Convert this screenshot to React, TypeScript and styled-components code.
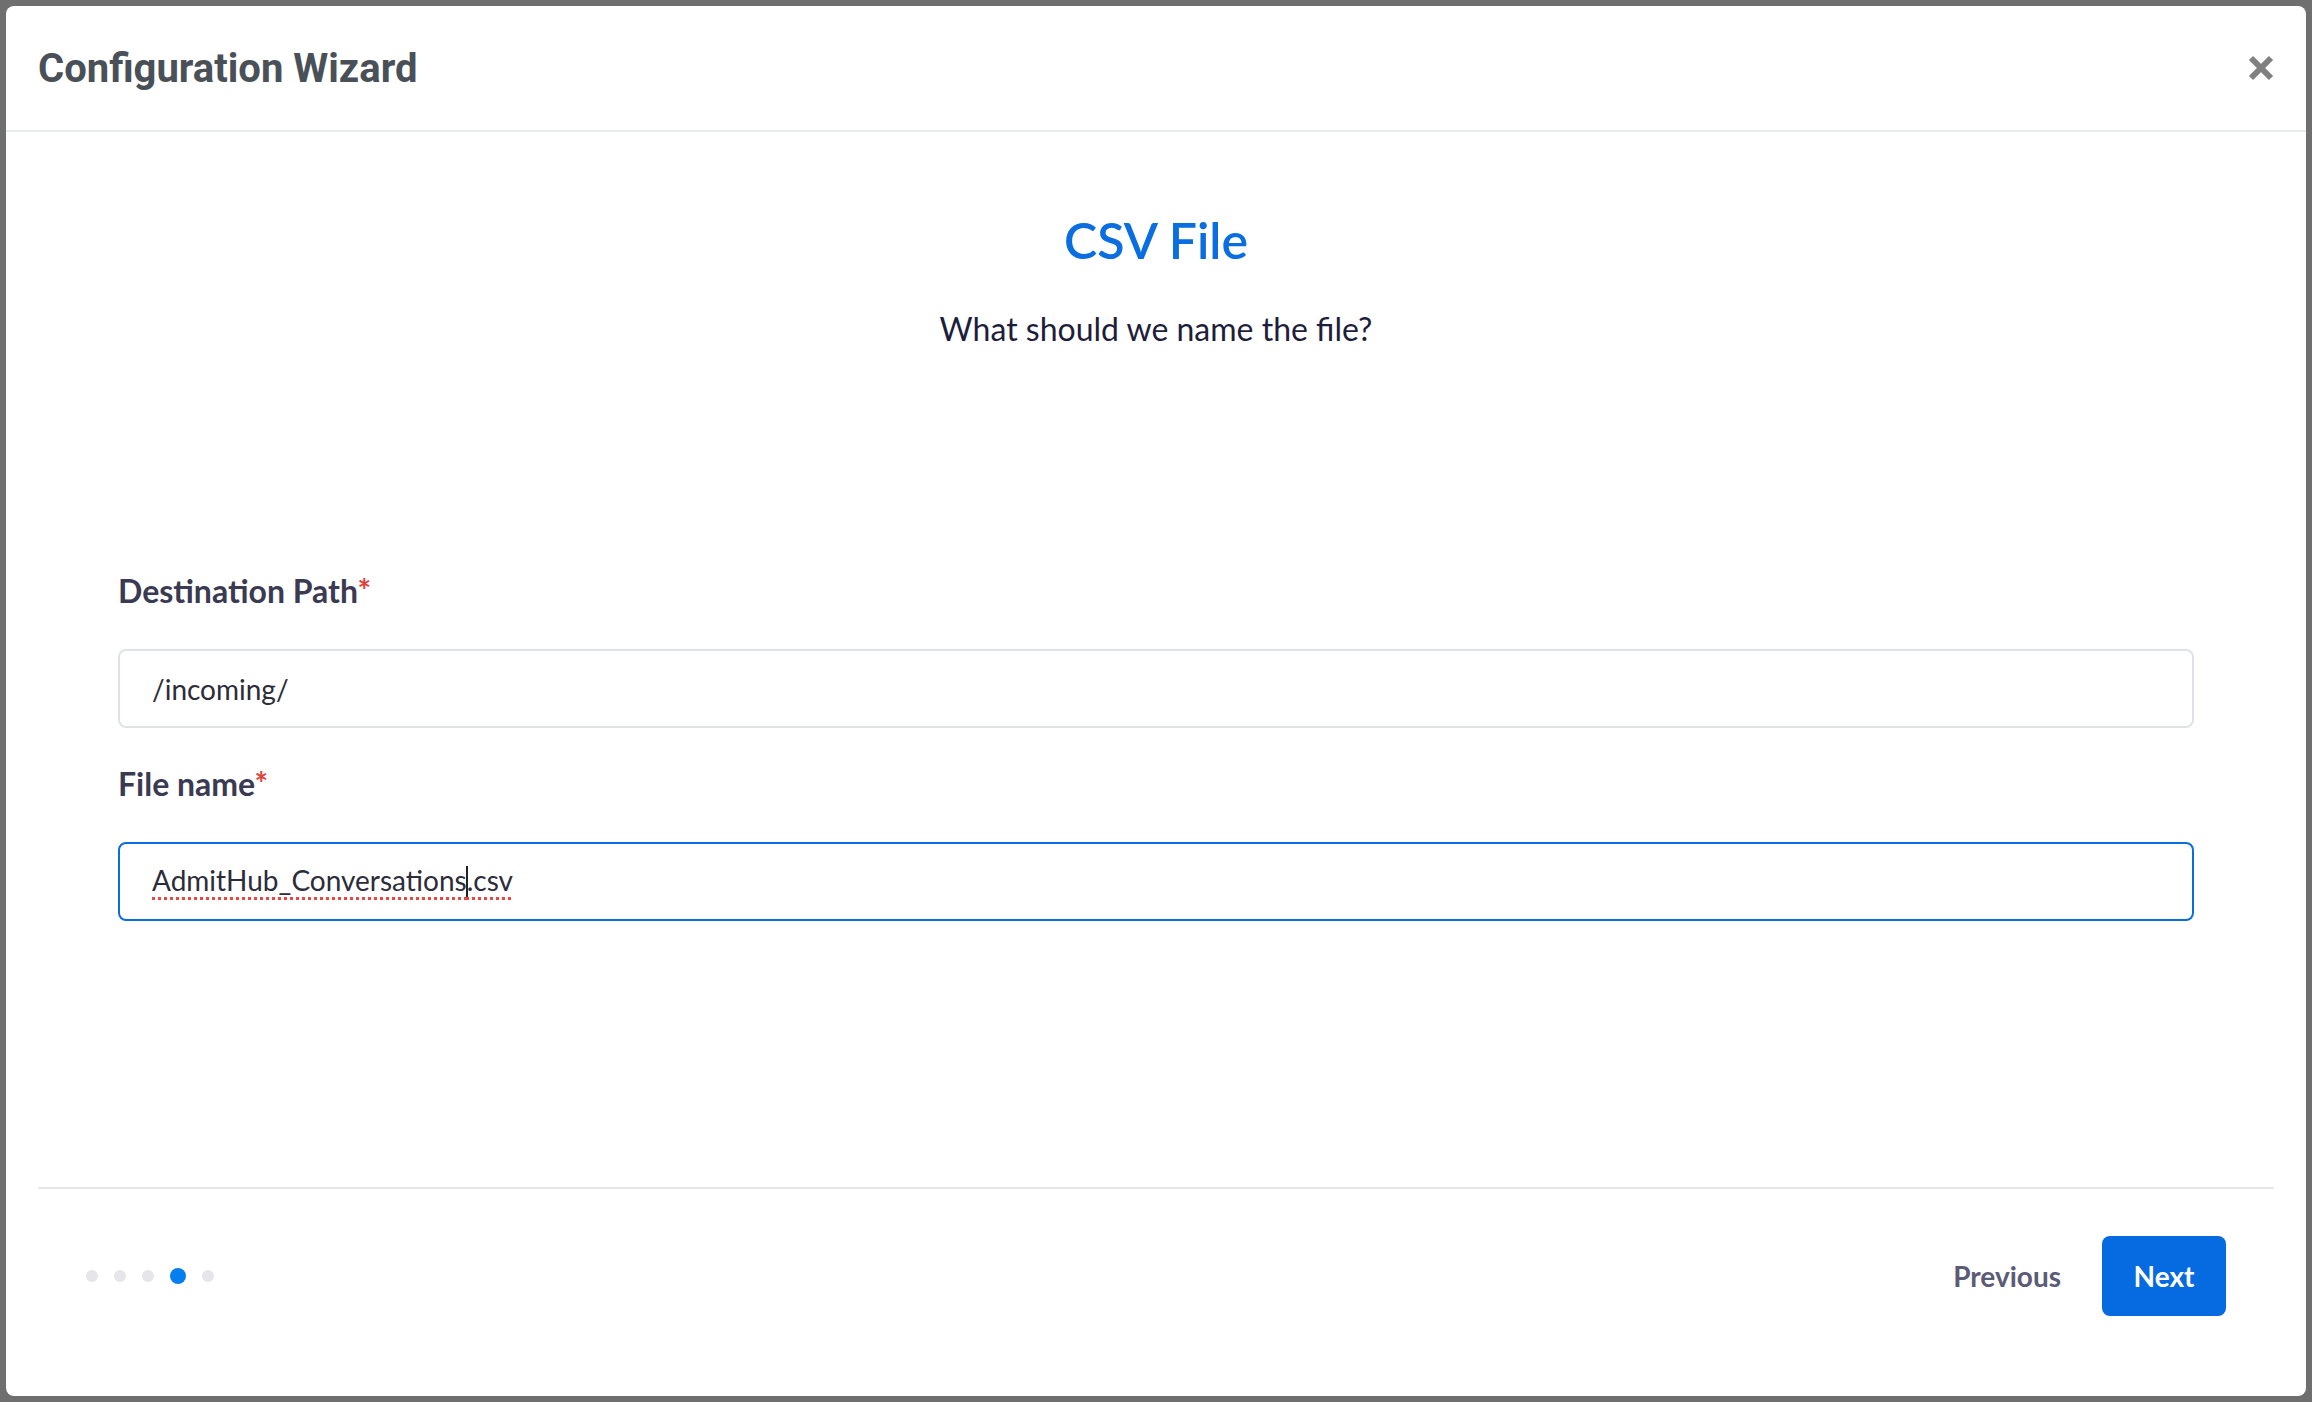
import React from 'react'
import styled, {createGlobalStyle} from 'styled-components'

const GlobalStyle = createGlobalStyle`
  html, body {
    margin: 0;
    padding: 0;
    background: #6f6f6f;
  }
  * {
    box-sizing: border-box;
  }
`

const Backdrop = styled.div`
  width: 2312px;
  height: 1402px;
  padding: 6px;
  background: #6f6f6f;
`

const Modal = styled.div`
  width: 100%;
  height: 100%;
  background: #fff;
  border-radius: 8px;
  display: flex;
  flex-direction: column;
  overflow: hidden;
`

const Header = styled.div`
  height: 126px;
  flex-shrink: 0;
  display: flex;
  align-items: center;
  justify-content: space-between;
  padding: 0 32px 0 32px;
  border-bottom: 2px solid #e9ecef;
`

const ModalTitle = styled.h2`
  margin: 0;
  font-family: Roboto, 'Liberation Sans', sans-serif;
  font-weight: 700;
  font-size: 40px;
  color: #4a5058;
`

const CloseButton = styled.button`
  border: none;
  background: none;
  padding: 0;
  width: 26px;
  height: 26px;
  display: flex;
  align-items: center;
  justify-content: center;
  cursor: pointer;
`

const Body = styled.div`
  flex: 1;
  display: flex;
  flex-direction: column;
  padding: 78px 112px 0 112px;
  font-family: Lato, 'Open Sans', sans-serif;
`

const StepTitle = styled.h1`
  margin: 0;
  text-align: center;
  font-size: 50px;
  line-height: 60px;
  font-weight: 600;
  color: #0b6ee0;
`

const StepSubtitle = styled.p`
  margin: 39px 0 0 0;
  text-align: center;
  font-size: 32px;
  line-height: 40px;
  color: #1e1e3c;
`

const Fields = styled.div`
  margin-top: 222px;
  display: flex;
  flex-direction: column;
`

const Label = styled.label<{$first?: boolean}>`
  margin-top: ${p => (p.$first ? '0' : '36px')};
  font-size: 32px;
  line-height: 40px;
  font-weight: 700;
  color: #3a3a52;
`

const Required = styled.span`
  color: #e0403a;
`

const InputBox = styled.div<{$focused?: boolean}>`
  margin-top: 38px;
  height: 79px;
  display: flex;
  align-items: center;
  padding: 0 32px;
  border: 2px solid ${p => (p.$focused ? '#0b6ee0' : '#dfe3e8')};
  border-radius: 8px;
  font-size: 28px;
  color: #2c2c3a;
`

const Misspelled = styled.span`
  text-decoration: underline dotted #ee4444;
  text-decoration-thickness: 3px;
  text-underline-offset: 6px;
`

const Caret = styled.span`
  display: inline-block;
  width: 2px;
  height: 34px;
  margin: 0 -1px;
  background: #222;
  vertical-align: middle;
`

const Footer = styled.div`
  margin: 0 32px;
  border-top: 2px solid #e5e5ea;
  padding: 47px 48px 80px 48px;
  display: flex;
  align-items: center;
  justify-content: space-between;
  font-family: Lato, 'Open Sans', sans-serif;
`

const Dots = styled.div`
  display: flex;
  align-items: center;
  gap: 16px;
`

const Dot = styled.span<{$active?: boolean}>`
  width: ${p => (p.$active ? 16 : 12)}px;
  height: ${p => (p.$active ? 16 : 12)}px;
  border-radius: 50%;
  background: ${p => (p.$active ? '#057ff0' : '#e5e5ea')};
`

const Actions = styled.div`
  display: flex;
  align-items: center;
  gap: 41px;
`

const PrevButton = styled.button`
  border: none;
  background: none;
  padding: 0;
  font-family: inherit;
  font-size: 28px;
  font-weight: 700;
  color: #5b5b75;
  cursor: pointer;
`

const NextButton = styled.button`
  border: none;
  height: 80px;
  width: 124px;
  border-radius: 8px;
  background: #066ae0;
  color: #fff;
  font-family: inherit;
  font-size: 28px;
  font-weight: 700;
  cursor: pointer;
`

const steps = [0, 1, 2, 3, 4]
const currentStep = 3

const App: React.FC = () => {
  return (
    <Backdrop>
      <GlobalStyle />
      <Modal>
        <Header>
          <ModalTitle>Configuration Wizard</ModalTitle>
          <CloseButton aria-label="Close">
            <svg width="26" height="26" viewBox="0 0 26 26">
              <path d="M3 3 L23 23 M23 3 L3 23" stroke="#808080" strokeWidth="6" />
            </svg>
          </CloseButton>
        </Header>
        <Body>
          <StepTitle>CSV File</StepTitle>
          <StepSubtitle>What should we name the file?</StepSubtitle>
          <Fields>
            <Label $first>
              Destination Path<Required>*</Required>
            </Label>
            <InputBox>/incoming/</InputBox>
            <Label>
              File name<Required>*</Required>
            </Label>
            <InputBox $focused>
              <Misspelled>
                AdmitHub_Conversations
                <Caret />
                .csv
              </Misspelled>
            </InputBox>
          </Fields>
        </Body>
        <Footer>
          <Dots>
            {steps.map(step => (
              <Dot key={`dot-${step}`} $active={step === currentStep} />
            ))}
          </Dots>
          <Actions>
            <PrevButton>Previous</PrevButton>
            <NextButton>Next</NextButton>
          </Actions>
        </Footer>
      </Modal>
    </Backdrop>
  )
}

export default App
